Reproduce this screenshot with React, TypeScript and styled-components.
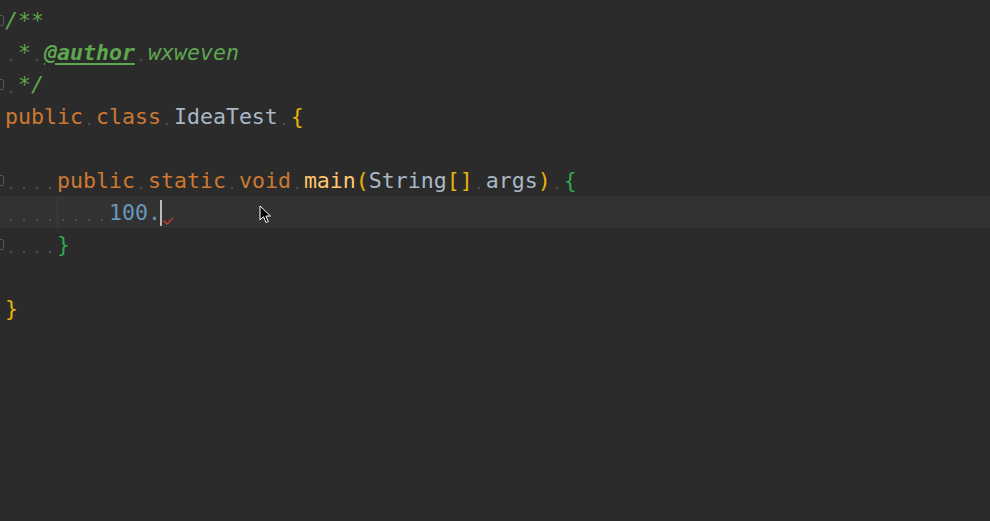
import React from "react";
import styled, { createGlobalStyle, css } from "styled-components";

const Global = createGlobalStyle`
  html, body { margin: 0; padding: 0; background: #2b2b2b; }
  body { width: 990px; height: 521px; overflow: hidden; }
`;

type Kind =
  | "kw"
  | "comment"
  | "tag"
  | "cls"
  | "fn"
  | "num"
  | "brace0"
  | "brace1"
  | "paren";

const colors: Record<Kind, string> = {
  kw: "#cc7832",
  comment: "#5ea64f",
  tag: "#5ea64f",
  cls: "#a9b7c6",
  fn: "#ffc66d",
  num: "#6897bb",
  brace0: "#eab308",
  brace1: "#2fa84f",
  paren: "#eab308",
};

const Editor = styled.div`
  position: relative;
  width: 990px;
  height: 521px;
  padding-top: 4px;
  box-sizing: border-box;
  display: flex;
  flex-direction: column;
  background: #2b2b2b;
  font-family: "DejaVu Sans Mono", "Liberation Mono", monospace;
  font-size: 21.59px;
`;

const Line = styled.div<{ $current?: boolean }>`
  height: 32px;
  display: flex;
  align-items: stretch;
  background: ${(p) => (p.$current ? "#323232" : "transparent")};
`;

const Gutter = styled.div`
  width: 5px;
  flex: 0 0 5px;
  overflow: hidden;
  display: flex;
  align-items: center;
`;

const FoldMark = styled.div`
  flex: 0 0 auto;
  margin-left: -6px;
  width: 8px;
  height: 9px;
  border: 1px solid #575757;
  border-radius: 2px;
`;

const Code = styled.div`
  display: flex;
  align-items: center;
  white-space: pre;
  line-height: 32px;
  padding-top: 1px;
  box-sizing: border-box;
  height: 32px;
`;

const Token = styled.span<{ $kind: Kind }>`
  color: ${(p) => colors[p.$kind]};
  ${(p) =>
    (p.$kind === "comment" || p.$kind === "tag") &&
    css`
      font-style: italic;
    `}
  ${(p) =>
    p.$kind === "tag" &&
    css`
      font-weight: bold;
      text-decoration: underline;
      text-underline-offset: 3px;
      text-decoration-thickness: 2px;
    `}
`;

const Ws = styled.span<{ $guide?: boolean }>`
  display: inline-block;
  width: 13px;
  height: 32px;
  background: linear-gradient(#4e4e4e, #4e4e4e) no-repeat;
  background-size: 2px 2px;
  background-position: 5px 22px;
  ${(p) =>
    p.$guide &&
    css`
      box-shadow: inset 1px 0 0 #36413a;
    `}
`;

const Caret = styled.span`
  display: inline-block;
  width: 2px;
  height: 26px;
  margin-left: -1px;
  background: #bbbbbb;
`;

const Squiggle = styled.svg`
  display: block;
  align-self: flex-end;
  margin-bottom: 3px;
  margin-left: 1px;
`;

const Pointer = styled.svg`
  position: absolute;
  left: 259px;
  top: 205px;
`;

type Part = [Kind | "ws" | "guide", string?];

const lines: { fold?: boolean; current?: boolean; parts: Part[] }[] = [
  { fold: true, parts: [["comment", "/**"]] },
  {
    parts: [
      ["ws"],
      ["comment", "*"],
      ["ws"],
      ["tag", "@author"],
      ["ws"],
      ["comment", "wxweven"],
    ],
  },
  { fold: true, parts: [["ws"], ["comment", "*/"]] },
  {
    parts: [
      ["kw", "public"],
      ["ws"],
      ["kw", "class"],
      ["ws"],
      ["cls", "IdeaTest"],
      ["ws"],
      ["brace0", "{"],
    ],
  },
  { parts: [] },
  {
    fold: true,
    parts: [
      ["ws"],
      ["ws"],
      ["ws"],
      ["ws"],
      ["kw", "public"],
      ["ws"],
      ["kw", "static"],
      ["ws"],
      ["kw", "void"],
      ["ws"],
      ["fn", "main"],
      ["paren", "("],
      ["cls", "String"],
      ["paren", "[]"],
      ["ws"],
      ["cls", "args"],
      ["paren", ")"],
      ["ws"],
      ["brace1", "{"],
    ],
  },
  {
    current: true,
    parts: [
      ["ws"],
      ["ws"],
      ["ws"],
      ["ws"],
      ["guide"],
      ["ws"],
      ["ws"],
      ["ws"],
      ["num", "100."],
    ],
  },
  { fold: true, parts: [["ws"], ["ws"], ["ws"], ["ws"], ["brace1", "}"]] },
  { parts: [] },
  { parts: [["brace0", "}"]] },
];

export default function App() {
  return (
    <>
      <Global />
      <Editor>
        {lines.map((line, i) => (
          <Line key={i} $current={line.current}>
            <Gutter>{line.fold && <FoldMark />}</Gutter>
            <Code>
              {line.parts.map(([k, t], j) =>
                k === "ws" ? (
                  <Ws key={j} />
                ) : k === "guide" ? (
                  <Ws key={j} $guide />
                ) : (
                  <Token key={j} $kind={k}>
                    {t}
                  </Token>
                )
              )}
              {line.current && (
                <>
                  <Caret />
                  <Squiggle width="11" height="8" viewBox="0 0 11 8">
                    <polyline
                      points="0.5,3.5 4,7 10,1"
                      fill="none"
                      stroke="#c0392b"
                      strokeWidth="1.6"
                    />
                  </Squiggle>
                </>
              )}
            </Code>
          </Line>
        ))}
        <Pointer width="13" height="19" viewBox="0 0 13 19">
          <path
            d="M1 1 L1 15 L4.5 11.7 L7 17.5 L9.3 16.5 L6.9 11 L11.5 11 Z"
            fill="#000"
            stroke="#fff"
            strokeWidth="1"
            strokeLinejoin="round"
          />
        </Pointer>
      </Editor>
    </>
  );
}
